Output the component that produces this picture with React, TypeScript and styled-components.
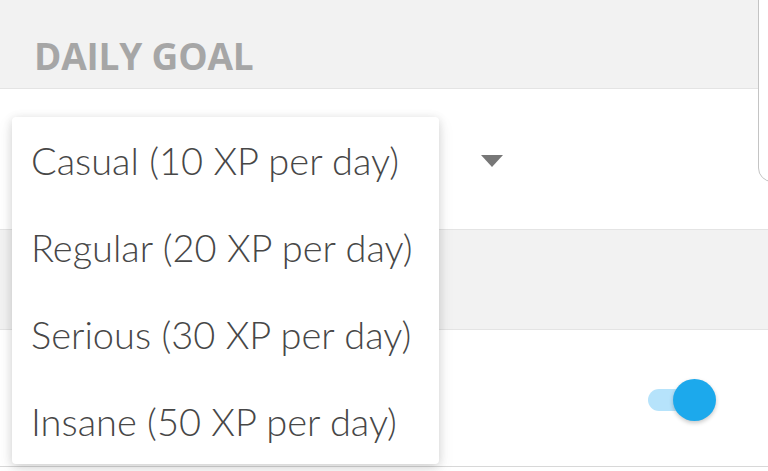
import React, { useState } from 'react';
import styled, { createGlobalStyle } from 'styled-components';

const GlobalStyle = createGlobalStyle`
  html, body {
    margin: 0;
    padding: 0;
    background: #ffffff;
    font-family: Lato, "Open Sans", sans-serif;
    overflow: hidden;
  }
`;

const goals = [
  { label: 'Casual', xp: 10 },
  { label: 'Regular', xp: 20 },
  { label: 'Serious', xp: 30 },
  { label: 'Insane', xp: 50 },
];

const App: React.FC = () => {
  const [selected, setSelected] = useState(0);
  const [reminder, setReminder] = useState(true);

  return (
    <S.Screen>
      <GlobalStyle />
      <S.SectionHeader>
        <S.SectionTitle>DAILY GOAL</S.SectionTitle>
      </S.SectionHeader>

      <S.Row height={141}>
        <S.SelectSpacer />
        <S.Caret />
      </S.Row>

      <S.Divider />

      <S.Row height={137} last>
        <S.Toggle on={reminder} onClick={() => setReminder(!reminder)}>
          <S.Track on={reminder} />
          <S.Knob on={reminder} />
        </S.Toggle>
      </S.Row>

      <S.SidePanel />

      <S.Menu>
        {goals.map((g, i) => (
          <S.MenuItem key={g.label} onClick={() => setSelected(i)} active={i === selected}>
            {g.label} ({g.xp} XP per day)
          </S.MenuItem>
        ))}
      </S.Menu>
    </S.Screen>
  );
};

export default App;

const S = {
  Screen: styled.div`
    position: relative;
    width: 768px;
    height: 471px;
    overflow: hidden;
    display: flex;
    flex-direction: column;
    background: #ffffff;
  `,
  SectionHeader: styled.div`
    height: 89px;
    box-sizing: border-box;
    background: #f2f2f2;
    border-bottom: 1px solid #e4e4e4;
    display: flex;
    align-items: flex-end;
    padding: 0 0 14px 34px;
  `,
  SectionTitle: styled.div`
    font-family: "Open Sans", sans-serif;
    font-weight: 700;
    font-size: 37px;
    line-height: 37px;
    color: #a6a6a6;
    letter-spacing: -0.2px;
  `,
  Row: styled.div<{ height: number; last?: boolean }>`
    height: ${p => p.height}px;
    box-sizing: border-box;
    background: #ffffff;
    border-bottom: 1px solid ${p => (p.last ? '#d8d8d8' : '#e4e4e4')};
    display: flex;
    align-items: center;
    padding: 0 52px 0 32px;
  `,
  SelectSpacer: styled.div`
    width: 449px;
  `,
  Caret: styled.div`
    width: 0;
    height: 0;
    border-left: 11px solid transparent;
    border-right: 11px solid transparent;
    border-top: 12px solid #777777;
    margin-top: 3px;
  `,
  Divider: styled.div`
    height: 100px;
    box-sizing: border-box;
    background: #f2f2f2;
    border-bottom: 1px solid #e4e4e4;
  `,
  Toggle: styled.div<{ on: boolean }>`
    position: relative;
    margin-left: auto;
    margin-top: 3px;
    width: 68px;
    height: 42px;
    cursor: pointer;
  `,
  Track: styled.div<{ on: boolean }>`
    position: absolute;
    left: 0;
    top: 10px;
    width: 56px;
    height: 22px;
    border-radius: 11px;
    background: ${p => (p.on ? '#b6e3fb' : '#dddddd')};
  `,
  Knob: styled.div<{ on: boolean }>`
    position: absolute;
    top: 0;
    left: ${p => (p.on ? '25px' : '0')};
    width: 43px;
    height: 42px;
    border-radius: 50%;
    background: ${p => (p.on ? '#1ca9ec' : '#f5f5f5')};
    box-shadow: 0 2px 4px rgba(0, 0, 0, 0.22);
  `,
  SidePanel: styled.div`
    position: absolute;
    left: 758px;
    top: -2px;
    width: 20px;
    height: 184px;
    box-sizing: border-box;
    background: #ffffff;
    border: 1px solid #c4c4c4;
    border-bottom-left-radius: 14px;
  `,
  Menu: styled.div`
    position: absolute;
    left: 12px;
    top: 117px;
    width: 427px;
    height: 347px;
    background: #ffffff;
    border-radius: 4px;
    box-shadow: 0 2px 10px rgba(0, 0, 0, 0.14), 0 6px 18px rgba(0, 0, 0, 0.08);
    display: flex;
    flex-direction: column;
  `,
  MenuItem: styled.div<{ active: boolean }>`
    flex: 1;
    display: flex;
    align-items: center;
    padding: 0 0 0 19px;
    font-family: Lato, sans-serif;
    font-weight: 300;
    font-size: 38px;
    color: #474747;
    white-space: nowrap;
    cursor: pointer;
  `,
};
